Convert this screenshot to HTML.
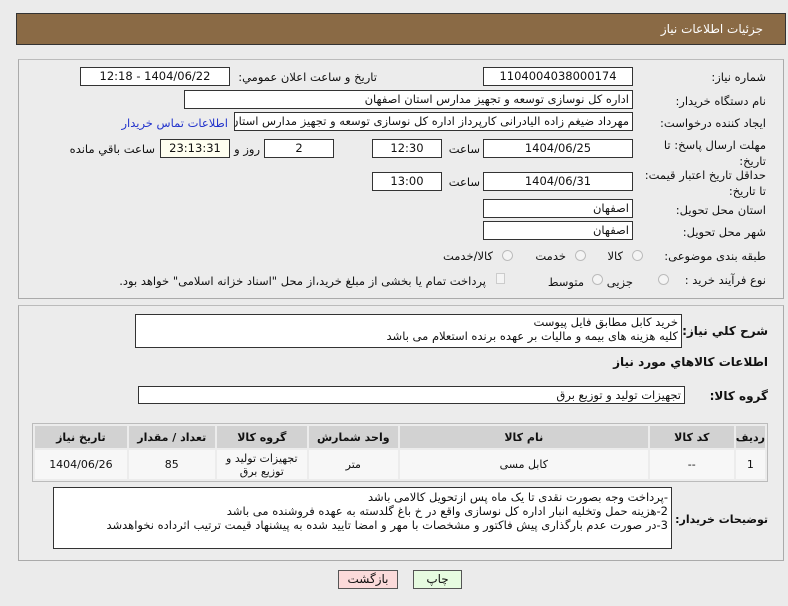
<!DOCTYPE html>
<html><head><meta charset="utf-8"><style>
*{box-sizing:border-box;margin:0;padding:0}
body{width:788px;height:606px;background:#ebebeb;font-family:"DejaVu Sans","Liberation Sans",sans-serif;font-size:11px;color:#111;position:relative;overflow:hidden}
.a{position:absolute;white-space:nowrap}
.hd{left:16px;top:13px;width:770px;height:32px;background:#8a6a45;border:1px solid #333}
.hd span{position:absolute;right:22px;top:8px;color:#fff;font-size:12px}
.pn{position:absolute;border:1px solid #aaa;border-top-color:#bbb;background:#ececec}
.in{position:absolute;background:#fff;border:1px solid #333;height:19px;line-height:17px;font-size:11.5px;text-align:center;direction:rtl;overflow:hidden;white-space:nowrap}
.r{text-align:right;padding-right:3px}
.lb{position:absolute;direction:rtl;white-space:nowrap;font-size:11.5px}
.rad{position:absolute;width:11px;height:11px;border-radius:50%;border:1px solid #bbb;background:#f4f4f4}
table{position:absolute;left:32px;top:423px;width:736px;border-collapse:separate;border-spacing:2px;border:1px solid #bbb;direction:rtl;font-size:11px}
th{background:#d2d2d2;height:22px;font-weight:bold}
td{background:#f7f7f7;height:29px;text-align:center;line-height:13px}
.btn{position:absolute;height:19px;border:1px solid #555;font-size:12px;text-align:center;line-height:17px}
</style></head><body>
<div class="a hd"><span>جزئیات اطلاعات نیاز</span></div>
<div class="pn" style="left:18px;top:59px;width:766px;height:240px"></div>
<div class="pn" style="left:18px;top:305px;width:766px;height:256px"></div>

<div class="lb" style="right:22px;top:70px">شماره نیاز:</div>
<div class="in" style="left:483px;top:67px;width:150px">1104004038000174</div>
<div class="lb" style="right:411px;top:70px">تاریخ و ساعت اعلان عمومي:</div>
<div class="in" style="left:80px;top:67px;width:150px">1404/06/22 - 12:18</div>

<div class="lb" style="right:22px;top:94px">نام دستگاه خریدار:</div>
<div class="in r" style="left:184px;top:90px;width:449px">اداره کل نوسازی  توسعه و تجهیز مدارس استان اصفهان</div>

<div class="lb" style="right:22px;top:116px">ایجاد کننده درخواست:</div>
<div class="in r" style="left:234px;top:112px;width:399px">مهرداد ضیغم زاده الیادرانی کارپرداز اداره کل نوسازی  توسعه و تجهیز مدارس استان اصفهان</div>
<div class="lb" style="right:560px;top:116px;color:#2233cc">اطلاعات تماس خریدار</div>

<div class="lb" style="right:22px;top:137px;line-height:16px;text-align:right">مهلت ارسال پاسخ: تا<br>تاریخ:</div>
<div class="in" style="left:483px;top:139px;width:150px">1404/06/25</div>
<div class="lb" style="right:308px;top:142px">ساعت</div>
<div class="in" style="left:372px;top:139px;width:70px">12:30</div>
<div class="in" style="left:264px;top:139px;width:70px">2</div>
<div class="lb" style="right:528px;top:142px">روز و</div>
<div class="in" style="left:160px;top:139px;width:70px;background:#fffff0">23:13:31</div>
<div class="lb" style="right:633px;top:142px">ساعت باقي مانده</div>

<div class="lb" style="right:22px;top:167px;line-height:16px;text-align:right">حداقل تاریخ اعتبار قیمت:<br>تا تاریخ:</div>
<div class="in" style="left:483px;top:172px;width:150px">1404/06/31</div>
<div class="lb" style="right:308px;top:175px">ساعت</div>
<div class="in" style="left:372px;top:172px;width:70px">13:00</div>

<div class="lb" style="right:22px;top:203px">استان محل تحویل:</div>
<div class="in r" style="left:483px;top:199px;width:150px">اصفهان</div>
<div class="lb" style="right:22px;top:225px">شهر محل تحویل:</div>
<div class="in r" style="left:483px;top:221px;width:150px">اصفهان</div>

<div class="lb" style="right:22px;top:249px">طبقه بندی موضوعی:</div>
<div class="rad" style="left:632px;top:250px"></div><div class="lb" style="right:165px;top:249px">کالا</div>
<div class="rad" style="left:575px;top:250px"></div><div class="lb" style="right:222px;top:249px">خدمت</div>
<div class="rad" style="left:502px;top:250px"></div><div class="lb" style="right:295px;top:249px">کالا/خدمت</div>

<div class="lb" style="right:22px;top:273px">نوع فرآیند خرید :</div>
<div class="rad" style="left:658px;top:274px"></div><div class="lb" style="right:155px;top:275px">جزیی</div>
<div class="rad" style="left:592px;top:274px"></div><div class="lb" style="right:204px;top:275px">متوسط</div>
<div class="a" style="left:496px;top:273px;width:9px;height:11px;border:1px solid #ccc;background:#f4f4f4"></div>
<div class="lb" style="right:302px;top:274px">پرداخت تمام یا بخشی از مبلغ خرید،از محل "اسناد خزانه اسلامی" خواهد بود.</div>

<div class="lb" style="right:20px;top:324px;font-weight:bold;font-size:12px">شرح کلي نیاز:</div>
<div class="in r" style="left:135px;top:314px;width:547px;height:34px;text-align:right;line-height:14px;white-space:normal">خرید کابل مطابق فایل پیوست<br>کلیه هزینه های بیمه و مالیات بر عهده برنده استعلام می باشد</div>
<div class="lb" style="right:20px;top:355px;font-weight:bold;font-size:12px">اطلاعات کالاهاي مورد نیاز</div>
<div class="lb" style="right:20px;top:389px;font-weight:bold;font-size:12px">گروه کالا:</div>
<div class="in r" style="left:138px;top:386px;width:547px;height:18px">تجهیزات تولید و توزیع برق</div>

<table>
<tr><th style="width:26px">ردیف</th><th style="width:84px">کد کالا</th><th style="width:248px">نام کالا</th><th style="width:89px">واحد شمارش</th><th style="width:90px">گروه کالا</th><th style="width:86px">تعداد / مقدار</th><th>تاریخ نیاز</th></tr>
<tr><td>1</td><td>--</td><td>کابل مسی</td><td>متر</td><td>تجهیزات تولید و<br>توزیع برق</td><td>85</td><td>1404/06/26</td></tr>
</table>

<div class="lb" style="right:20px;top:513px;font-weight:bold;font-size:11px">توضیحات خریدار:</div>
<div class="in r" style="left:53px;top:487px;width:619px;height:62px;text-align:right;line-height:14px;white-space:normal;padding-top:2px">-پرداخت وجه بصورت نقدی تا یک ماه پس ازتحویل کالامی باشد<br>2-هزینه حمل وتخلیه انبار اداره کل نوسازی واقع در خ باغ گلدسته به عهده فروشنده می باشد<br>3-در صورت عدم بارگذاری پیش فاکتور و مشخصات با مهر و امضا تایید شده به پیشنهاد قیمت ترتیب اثرداده نخواهدشد</div>

<div class="btn" style="left:338px;top:570px;width:60px;background:#fbdada">بازگشت</div>
<div class="btn" style="left:413px;top:570px;width:49px;background:#e6fbe0">چاپ</div>
</body></html>
